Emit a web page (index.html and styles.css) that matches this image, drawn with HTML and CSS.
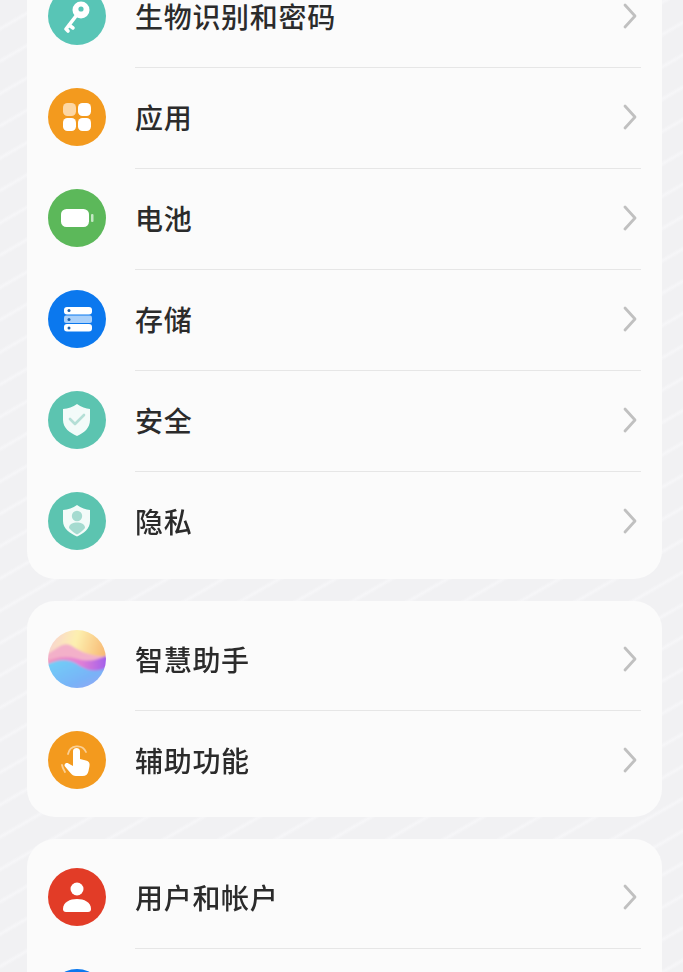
FILE: index.html
```html
<!DOCTYPE html>
<html lang="zh">
<head>
    <title>设置</title>
    <meta charset="utf-8">
    <meta name="viewport" content="user-scalable=yes, width=device-width" />
    <link rel="stylesheet" href="styles.css">
</head>
<body>
    <div class="screen">
        <div class="card first">
            <div class="row">
                <svg class="icon" viewBox="0 0 58 58">
                    <circle cx="29" cy="29" r="29" fill="#58c5b6"/>
                    <path d="M28 29 L18 42 M21 38 L25 41 M18 42 L20 44" stroke="#fff" stroke-width="3.600" stroke-linecap="round" fill="none"/>
                    <circle cx="33" cy="23" r="8.500" fill="#fff"/>
                    <circle cx="33" cy="22" r="2.600" fill="#58c5b6"/>
                </svg>
                <div class="body"><span class="label">生物识别和密码</span><svg class="chev" viewBox="0 0 14 26"><path d="M2 2 L12 13 L2 24"/></svg></div>
            </div>
            <div class="row">
                <svg class="icon" viewBox="0 0 58 58">
                    <circle cx="29" cy="29" r="29" fill="#f39a1e"/>
                    <rect x="15" y="15" width="13" height="13" rx="4.500" fill="#fdd7a4"/>
                    <rect x="30" y="15" width="13" height="13" rx="4.500" fill="#fff"/>
                    <rect x="15" y="30" width="13" height="13" rx="4.500" fill="#fff"/>
                    <rect x="30" y="30" width="13" height="13" rx="4.500" fill="#fff"/>
                </svg>
                <div class="body"><span class="label">应用</span><svg class="chev" viewBox="0 0 14 26"><path d="M2 2 L12 13 L2 24"/></svg></div>
            </div>
            <div class="row">
                <svg class="icon" viewBox="0 0 58 58">
                    <circle cx="29" cy="29" r="29" fill="#5cb85a"/>
                    <rect x="13" y="20" width="28" height="18" rx="5.500" fill="#fff"/>
                    <rect x="43" y="25" width="2.500" height="8" rx="1" fill="#c5e8c4"/>
                </svg>
                <div class="body"><span class="label">电池</span><svg class="chev" viewBox="0 0 14 26"><path d="M2 2 L12 13 L2 24"/></svg></div>
            </div>
            <div class="row">
                <svg class="icon" viewBox="0 0 58 58">
                    <circle cx="29" cy="29" r="29" fill="#0b78ee"/>
                    <rect x="16" y="17" width="28" height="7.500" rx="3" fill="#fff"/>
                    <rect x="16" y="25.500" width="28" height="7.500" rx="2" fill="#a9d0fa"/>
                    <rect x="16" y="34" width="28" height="7.500" rx="3" fill="#fff"/>
                    <circle cx="21" cy="20.500" r="1.500" fill="#1c5fa8"/>
                    <circle cx="21" cy="29.500" r="1.500" fill="#1c5fa8"/>
                    <circle cx="21" cy="38" r="1.500" fill="#1c5fa8"/>
                </svg>
                <div class="body"><span class="label">存储</span><svg class="chev" viewBox="0 0 14 26"><path d="M2 2 L12 13 L2 24"/></svg></div>
            </div>
            <div class="row">
                <svg class="icon" viewBox="0 0 58 58">
                    <circle cx="29" cy="29" r="29" fill="#5cc4b0"/>
                    <path d="M29 13 C33 16 38 17.500 42 18 L42 29 C42 37 36 42 29 45 C22 42 15 37 15 29 L15 18 C20 17.500 25 16 29 13 Z" fill="#f3fbf9"/>
                    <path d="M22 28 L27 33 L36 24" stroke="#b4dfd6" stroke-width="2.600" stroke-linecap="round" stroke-linejoin="round" fill="none"/>
                </svg>
                <div class="body"><span class="label">安全</span><svg class="chev" viewBox="0 0 14 26"><path d="M2 2 L12 13 L2 24"/></svg></div>
            </div>
            <div class="row">
                <svg class="icon" viewBox="0 0 58 58">
                    <circle cx="29" cy="29" r="29" fill="#5cc4b0"/>
                    <path d="M29 13 C33 16 38 17.500 42 18 L42 29 C42 37 36 41 29 44.500 C22 41 15 37 15 29 L15 18 C20 17.500 25 16 29 13 Z" fill="#f3fbf9"/>
                    <circle cx="29" cy="24" r="5.200" fill="#a5dbd0"/>
                    <path d="M21 36 C21 32 25 30.500 29 30.500 C33 30.500 37 32 37 36 C34.500 39 32 41 29 42.500 C26 41 23.500 39 21 36 Z" fill="#a5dbd0"/>
                </svg>
                <div class="body last"><span class="label">隐私</span><svg class="chev" viewBox="0 0 14 26"><path d="M2 2 L12 13 L2 24"/></svg></div>
            </div>
        </div>

        <div class="card">
            <div class="row">
                <svg class="icon" viewBox="0 0 58 58">
                    <defs>
                        <linearGradient id="sky" x1="0" y1="0" x2="1" y2="0.300">
                            <stop offset="0" stop-color="#f6c9dc"/>
                            <stop offset="0.500" stop-color="#fdf0b0"/>
                            <stop offset="1" stop-color="#f7b56f"/>
                        </linearGradient>
                        <linearGradient id="mid" x1="0" y1="0" x2="1" y2="0">
                            <stop offset="0" stop-color="#f29abb"/>
                            <stop offset="0.550" stop-color="#e27fd6"/>
                            <stop offset="1" stop-color="#9a5ced"/>
                        </linearGradient>
                        <linearGradient id="low" x1="0" y1="0" x2="1" y2="1">
                            <stop offset="0" stop-color="#6fd3f7"/>
                            <stop offset="0.600" stop-color="#79b2f7"/>
                            <stop offset="1" stop-color="#a3a0f3"/>
                        </linearGradient>
                        <clipPath id="ball"><circle cx="29" cy="29" r="29"/></clipPath>
                        <filter id="soft" x="-10%" y="-10%" width="120%" height="120%"><feGaussianBlur stdDeviation="1.300"/></filter>
                    </defs>
                    <g clip-path="url(#ball)">
                        <g filter="url(#soft)">
                            <rect x="-4" y="-4" width="66" height="66" fill="url(#sky)"/>
                            <path d="M-4 26 C8 20 14 12 22 15 C30 19 36 26 62 27 L62 62 L-4 62 Z" fill="#f3b0c9"/>
                            <path d="M-4 32 C10 26 20 26 30 29 C40 32 48 31 62 24 L62 62 L-4 62 Z" fill="url(#mid)"/>
                            <path d="M-4 36 C10 29 20 28 32 36 C40 41 50 43 62 36 L62 62 L-4 62 Z" fill="url(#low)"/>
                        </g>
                    </g>
                </svg>
                <div class="body"><span class="label">智慧助手</span><svg class="chev" viewBox="0 0 14 26"><path d="M2 2 L12 13 L2 24"/></svg></div>
            </div>
            <div class="row">
                <svg class="icon" viewBox="0 0 58 58">
                    <circle cx="29" cy="29" r="29" fill="#f39a1e"/>
                    <path d="M20 23 A9.500 9.500 0 0 1 38 21" stroke="#fbcf94" stroke-width="1.800" stroke-linecap="round" fill="none"/>
                    <path d="M14 34 C14.500 37 16 39 17 41" stroke="#fbcf94" stroke-width="1.800" stroke-linecap="round" fill="none"/>
                    <path d="M25 20 C25 16 32 16 32 20 L32 28 L38 29.500 C41 30.200 42 32 41.500 35 L40.500 40 C40 43 38 45 34.500 45 L28 45 C25.500 45 24 44 22.500 42 L17 35.500 C15.500 33.500 18 31 20.500 32.500 L25 35 Z" fill="#fff"/>
                </svg>
                <div class="body last"><span class="label">辅助功能</span><svg class="chev" viewBox="0 0 14 26"><path d="M2 2 L12 13 L2 24"/></svg></div>
            </div>
        </div>

        <div class="card">
            <div class="row">
                <svg class="icon" viewBox="0 0 58 58">
                    <circle cx="29" cy="29" r="29" fill="#e23c27"/>
                    <circle cx="29" cy="21" r="6.500" fill="#fff"/>
                    <path d="M15 41 C15 34 22 31 29 31 C36 31 43 34 43 41 C43 43 42 44 40 44 L18 44 C16 44 15 43 15 41 Z" fill="#fff"/>
                </svg>
                <div class="body"><span class="label">用户和帐户</span><svg class="chev" viewBox="0 0 14 26"><path d="M2 2 L12 13 L2 24"/></svg></div>
            </div>
            <div class="row">
                <svg class="icon" viewBox="0 0 58 58"><circle cx="29" cy="29" r="29" fill="#0b78ee"/></svg>
                <div class="body last"></div>
            </div>
        </div>
    </div>
</body>
</html>
```

FILE: styles.css
```css
html, body {
    margin: 0px;
    height: 972px;
    overflow: hidden;
}
body {
    background-color: #f2f2f4;
    background-image: repeating-linear-gradient(150deg, #f1f1f3 0px, #f1f1f3 22px, #f6f6f8 25px, #f1f1f3 28px);
    color: #2b2b2b;
    font-family: "Noto Sans CJK SC", "Liberation Sans", sans-serif;
}

.screen {
    display: flex;
    flex-direction: column;
    gap: 22px;
    padding: 0px 21px 0px 27px;
    filter: blur(0.5px);
}

.card {
    padding: 9px 21px 5px 21px;
    background-color: #fbfbfb;
    border-radius: 28px;
}
.card.first {
    margin-top: -42px;
    padding-bottom: 6px;
}

.row {
    display: flex;
    align-items: center;
    gap: 29px;
    height: 101px;
}

.icon {
    width: 58px;
    height: 58px;
    flex: none;
    margin-bottom: 3px;
}

.body {
    flex: 1;
    height: 100%;
    display: flex;
    align-items: center;
    justify-content: space-between;
    padding-right: 4px;
    padding-bottom: 3px;
    border-bottom: 1px solid #e6e6e6;
    box-sizing: border-box;
}
.body.last {
    border-bottom: none;
}

.label {
    font-size: 28px;
    font-weight: 500;
    letter-spacing: 0.7px;
    line-height: 40px;
}

.chev {
    width: 14px;
    height: 26px;
}
.chev path {
    fill: none;
    stroke: #c0c0c0;
    stroke-width: 2.8;
    stroke-linecap: round;
    stroke-linejoin: round;
}
```
